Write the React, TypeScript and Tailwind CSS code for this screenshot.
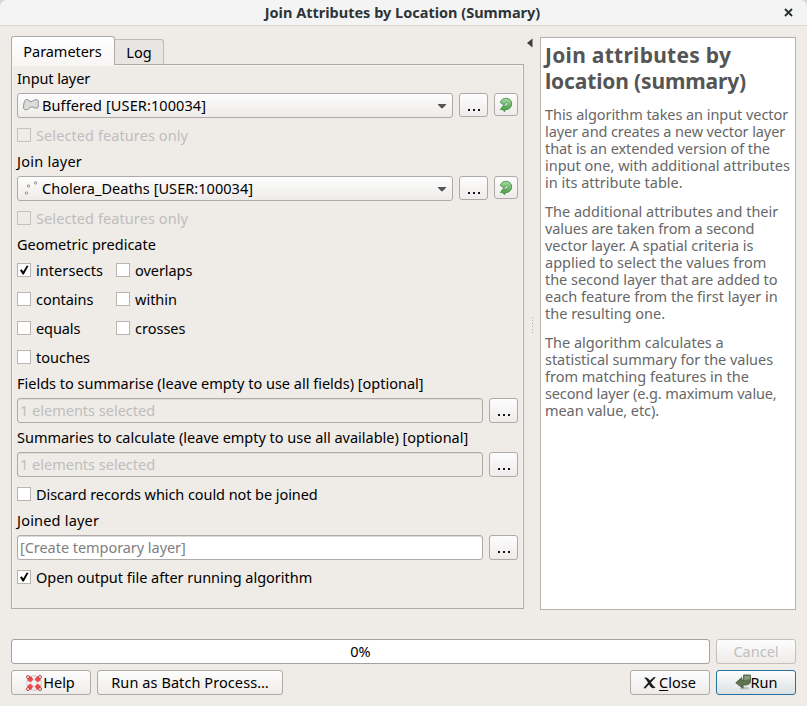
import type { ReactNode } from "react";

const BTN =
  "flex items-center justify-center rounded-[3px] border border-[#aeaaa7] bg-linear-to-b from-[#fdfdfd] to-[#eeecea] whitespace-nowrap";

function Label({ children, className = "h-7 pb-[2px]" }: { children: ReactNode; className?: string }) {
  return <div className={`flex items-center whitespace-nowrap ${className}`}>{children}</div>;
}

function Check({
  checked = false,
  disabled = false,
  className = "",
  children,
}: {
  checked?: boolean;
  disabled?: boolean;
  className?: string;
  children: ReactNode;
}) {
  return (
    <div className={`flex items-center gap-[5px] whitespace-nowrap ${disabled ? "text-[#bebebe]" : ""} ${className}`}>
      <span
        className={`block size-[14px] shrink-0 border ${disabled ? "border-[#c4c0bc] bg-[#efebe7]" : "border-[#b8b4b0] bg-white"}`}
      >
        {checked && (
          <svg viewBox="0 0 12 12" className="block size-3">
            <path d="M2 6.2 3.7 5.3 5.2 7.6 8.6 1.8 10.6 1.8 5.8 10.5 4.6 10.5Z" fill="#000" />
          </svg>
        )}
      </span>
      {children}
    </div>
  );
}

function Dots({ className = "h-[25px]" }: { className?: string }) {
  return (
    <button className={`${BTN} w-[29px] shrink-0 ${className}`}>
      <span className="flex gap-[3px] pt-[9px]">
        <i className="block size-[2px] bg-[#15151f]" />
        <i className="block size-[2px] bg-[#15151f]" />
        <i className="block size-[2px] bg-[#15151f]" />
      </span>
    </button>
  );
}

function RefreshIcon() {
  return (
    <svg viewBox="0 0 14 16" className="h-4 w-[14px]">
      <defs>
        <linearGradient id="leaf" x1="0" y1="0" x2="0" y2="1">
          <stop offset="0" stopColor="#a9d99f" />
          <stop offset="1" stopColor="#3f963d" />
        </linearGradient>
      </defs>
      <path
        d="M1.3 5.4C2 2.6 4.5 1.3 7.2 1.3C10.8 1.4 12.8 3.9 12.7 7C12.5 10.5 9.8 12.6 6.6 12.7L5.4 14.8L4.3 12.8L1.4 12.5L4.2 8.6C6 9.4 8.6 9.2 8.9 7.2C9.1 5.8 7.6 5.2 6.5 5.8C5.9 6.1 6.1 6.7 6.7 7.1C5 7.8 2.6 7.2 1.3 5.4Z"
        fill="url(#leaf)"
        stroke="#43934a"
        strokeWidth="0.9"
      />
    </svg>
  );
}

function PolygonIcon() {
  return (
    <svg viewBox="0 0 16 16" className="size-4 shrink-0">
      <path
        d="M2.2 2.2C3.4 1 5 1.3 6 2.6C7.2 3.9 9 3.9 10.4 2.6C12.2 1.2 15 1.4 15.4 3.2C15.6 4.8 14.9 6.2 15.3 7.8C15.8 10.2 13.2 10.9 11.2 9.6C9.2 8.4 7.6 8.8 6 10.4C4 12.4 .9 12.3 .6 10C.5 7.4 .9 3.9 2.2 2.2Z"
        fill="#dcdcdc"
        stroke="#8f8f8f"
        strokeWidth="1"
      />
    </svg>
  );
}

function PointsIcon() {
  return (
    <svg viewBox="0 0 16 16" className="size-4 shrink-0" fill="#f4f4f4" stroke="#8a8a8a" strokeWidth="0.9">
      <circle cx="3.5" cy="12" r="1.2" />
      <circle cx="5.5" cy="5" r="1.2" />
      <circle cx="12.5" cy="2" r="1.2" />
    </svg>
  );
}

function LayerRow({ icon, children }: { icon: ReactNode; children: ReactNode }) {
  return (
    <div className="flex items-start gap-[6px]">
      <div className="flex h-[25px] w-[436px] items-center rounded-[3px] border border-[#aeaaa7] bg-linear-to-b from-[#fdfdfd] to-[#eeecea] pr-[6px] pl-[5px] whitespace-nowrap">
        {icon}
        <span className="flex-1 pl-[3px]">{children}</span>
        <svg viewBox="0 0 8 5" className="mt-px h-[5px] w-2">
          <path d="M0 0H8V.8L4.7 4.3H3.3L0 .8Z" fill="#555" />
        </svg>
      </div>
      <Dots className="h-6" />
      <button className={`${BTN} h-[23px] w-6`}>
        <RefreshIcon />
      </button>
    </div>
  );
}

function FieldRow({ className, children }: { className: string; children: ReactNode }) {
  return (
    <div className="flex gap-[6px]">
      <div
        className={`flex h-[25px] w-[466px] items-center rounded-[3px] border border-[#aeaaa7] pl-[2px] whitespace-nowrap shadow-[inset_0_1px_0_#dedad6] ${className}`}
      >
        {children}
      </div>
      <Dots />
    </div>
  );
}

function HelpIcon() {
  return (
    <svg viewBox="0 0 16 16" className="size-4">
      <circle cx="8" cy="8" r="5.2" fill="none" stroke="#c4c4c4" strokeWidth="5" />
      <circle cx="8" cy="8" r="5.2" fill="none" stroke="#ececec" strokeWidth="3.8" />
      <g fill="#ee4a4a">
        <path d="M1 5 5 1 7.2 4.4 4.4 7.2Z" />
        <path d="M15 5 11 1 8.8 4.4 11.6 7.2Z" />
        <path d="M1 11 5 15 7.2 11.6 4.4 8.8Z" />
        <path d="M15 11 11 15 8.8 11.6 11.6 8.8Z" />
      </g>
      <g fill="#fff" stroke="#b3262b" strokeWidth="0.9">
        <circle cx="2" cy="2" r="1.5" />
        <circle cx="14" cy="2" r="1.5" />
        <circle cx="2" cy="14" r="1.5" />
        <circle cx="14" cy="14" r="1.5" />
      </g>
    </svg>
  );
}

function CloseIcon() {
  return (
    <svg viewBox="0 0 14 14" className="h-[14px] w-[14px]">
      <path
        d="M1.2 1.8C3.8 .8 5.2 2.3 6.9 4.6L11 .9L12.8 1.3L8 6.5C9.2 8.8 10.4 10.3 12.6 11.2C10.8 12.8 8.6 12.3 7.1 10.2L6 8.6L2.3 12.5L.5 12.1L5 6.8C3.9 4.6 3 3 1.2 1.8Z"
        fill="#1c1c1c"
      />
    </svg>
  );
}

function RunIcon() {
  return (
    <svg viewBox="0 0 16 16" className="mt-[-2px] size-4">
      <ellipse cx="9.5" cy="14.3" rx="4.6" ry="1.2" fill="#b9bfc0" />
      <path
        d="M8.6 1H15.4V7.8C15.2 10.2 12.4 11.2 8 11.1V14.3L.8 8.8L6.8 3.6V6.1H8.6Z"
        fill="#5f7450"
        stroke="#3f5038"
        strokeWidth="0.8"
      />
      <path d="M9.3 1.7H14.8V5.2L9.3 6Z" fill="#8b9d7b" />
    </svg>
  );
}

const HELP: { text: string; track?: string }[][] = [
  [
    { text: "This algorithm takes an input vector", track: "tracking-[-0.06px]" },
    { text: "layer and creates a new vector layer", track: "tracking-[-0.1px]" },
    { text: "that is an extended version of the", track: "tracking-[-0.09px]" },
    { text: "input one, with additional attributes" },
    { text: "in its attribute table." },
  ],
  [
    { text: "The additional attributes and their" },
    { text: "values are taken from a second", track: "tracking-[-0.1px]" },
    { text: "vector layer. A spatial criteria is", track: "tracking-[-0.02px]" },
    { text: "applied to select the values from" },
    { text: "the second layer that are added to", track: "tracking-[-0.04px]" },
    { text: "each feature from the first layer in" },
    { text: "the resulting one." },
  ],
  [
    { text: "The algorithm calculates a" },
    { text: "statistical summary for the values", track: "tracking-[-0.03px]" },
    { text: "from matching features in the" },
    { text: "second layer (e.g. maximum value,", track: "tracking-[-0.13px]" },
    { text: "mean value, etc).", track: "tracking-[-0.07px]" },
  ],
];

export default function App() {
  return (
    <div className="h-[706px] w-[807px] overflow-hidden bg-[#d8d8d8]">
      <div className="flex h-full flex-col overflow-hidden rounded-t-[7px] bg-[#efebe7] font-['Noto_Sans',sans-serif] text-[14.5px] leading-[17px] text-black">
        <header className="flex h-[26px] shrink-0 items-center border-b border-[#d9d6d3] bg-[#f4f4f4] pr-[14px]">
          <h1 className="flex-1 pl-[21px] text-center font-bold text-[#2e3436]">
            Join Attributes by Location (Summary)
          </h1>
          <svg viewBox="0 0 9 9" className="size-[9px]">
            <path d="M1 1 8 8M8 1 1 8" stroke="#2e3436" strokeWidth="2" />
          </svg>
        </header>

        <div className="flex pl-[11px]">
          <main className="w-[513px] pt-[11px]">
            <div className="flex h-[27px] items-end">
              <div className="z-10 mb-[-1px] flex h-[29px] w-[104px] items-center justify-center rounded-t-[3px] border border-b-0 border-[#aeaaa7] bg-linear-to-b from-white to-[#f8f6f4] pt-px pr-px tracking-[-0.05px]">
                Parameters
              </div>
              <div className="flex h-[25px] w-[49px] items-center justify-center rounded-tr-[3px] border border-b-0 border-l-0 border-[#bebab7] bg-[#e8e5e2]">
                Log
              </div>
            </div>

            <section className="h-[545px] border border-[#aeaaa7] pl-[5px] shadow-[inset_1px_1px_0_#f8f6f4,inset_-1px_0_0_#f8f6f4]">
              <Label className="h-7 pb-[2px] tracking-[-0.1px]">Input layer</Label>
              <LayerRow icon={<PolygonIcon />}>
                <span className="tracking-[0.1px]">Buffered [USER:100034]</span>
              </LayerRow>
              <Check disabled className="mt-1 h-[26px] tracking-[0.09px]">
                Selected features only
              </Check>
              <Label className="h-7 pb-[2px] tracking-[0.24px]">Join layer</Label>
              <LayerRow icon={<PointsIcon />}>
                <span className="tracking-[0.05px]">Cholera_Deaths [USER:100034]</span>
              </LayerRow>
              <Check disabled className="mt-1 h-[26px] tracking-[0.09px]">
                Selected features only
              </Check>
              <Label>Geometric predicate</Label>
              <div className="grid grid-cols-[99px_1fr] gap-y-[7px] pb-px">
                <Check checked className="h-[22px] tracking-[0.06px]">intersects</Check>
                <Check className="h-[22px] tracking-[-0.05px]">overlaps</Check>
                <Check className="h-[22px] tracking-[-0.05px]">contains</Check>
                <Check className="h-[22px]">within</Check>
                <Check className="h-[22px] tracking-[-0.1px]">equals</Check>
                <Check className="h-[22px]">crosses</Check>
                <Check className="h-[22px]">touches</Check>
              </div>
              <Label className="h-[29px]">Fields to summarise (leave empty to use all fields) [optional]</Label>
              <FieldRow className="text-[#bebebe]">1 elements selected</FieldRow>
              <Label className="h-[29px] tracking-[-0.015px]">
                Summaries to calculate (leave empty to use all available) [optional]
              </Label>
              <FieldRow className="text-[#bebebe]">1 elements selected</FieldRow>
              <Check className="mt-1 h-[26px] tracking-[-0.07px]">Discard records which could not be joined</Check>
              <Label className="h-7 pb-[2px] tracking-[0.2px]">Joined layer</Label>
              <FieldRow className="bg-white tracking-[-0.05px] text-[#808080]">[Create temporary layer]</FieldRow>
              <Check checked className="mt-1 h-[26px] tracking-[-0.02px]">
                Open output file after running algorithm
              </Check>
            </section>
          </main>

          <div className="flex w-4 flex-col items-center pt-[12px]">
            <svg viewBox="0 0 6 9" className="mr-[5px] h-[10px] w-[6px]">
              <path d="M5.5 0V9L0 4.5Z" fill="#3c3c3c" />
            </svg>
            <div className="mt-[269px] flex flex-col gap-[2px]">
              {[0, 1, 2, 3, 4, 5].map((i) => (
                <i key={i} className="block size-px bg-[#b0aca8]" />
              ))}
            </div>
          </div>

          <aside className="mt-[11px] h-[573px] w-[256px] border border-[#b5b1ae] bg-white pt-[4px] pl-1 whitespace-nowrap text-[#676767]">
            <h2 className="text-[21px] leading-[26px] font-bold text-[#555]">
              <span className="block tracking-[0.27px]">Join attributes by</span>
              <span className="block tracking-[-0.15px]">location (summary)</span>
            </h2>
            <div className="flex flex-col gap-3 pt-[12px]">
              {HELP.map((lines, i) => (
                <p key={i}>
                  {lines.map(({ text, track = "" }) => (
                    <span key={text} className={`block ${track}`}>
                      {text}
                    </span>
                  ))}
                </p>
              ))}
            </div>
          </aside>
        </div>

        <footer className="mt-[29px] flex flex-col gap-[6px] px-[11px]">
          <div className="flex gap-[6px]">
            <div className="flex h-[25px] w-[699px] items-center justify-center rounded-[3px] border border-[#a5a19e] bg-white">
              0%
            </div>
            <button className={`${BTN} h-[25px] w-20 border-[#c4c0bd] text-[#bebebe]`}>Cancel</button>
          </div>
          <div className="flex gap-[6px]">
            <button className={`${BTN} h-[25px] w-20 pr-px`}>
              <HelpIcon />
              <span className="pl-px">Help</span>
            </button>
            <button className={`${BTN} h-[25px] w-[186px] tracking-[0.08px]`}>Run as Batch Process…</button>
            <div className="flex-1" />
            <button className={`${BTN} h-[25px] w-20 pr-px`}>
              <CloseIcon />
              <span className="pl-[2px]">
                <span className="underline underline-offset-2">C</span>lose
              </span>
            </button>
            <button className="flex h-[25px] w-20 items-center justify-center rounded-[3px] border border-[#28719f] bg-linear-to-b from-[#fdfdfd] to-[#dce1e3]">
              <RunIcon />
              Run
            </button>
          </div>
        </footer>
      </div>
    </div>
  );
}
